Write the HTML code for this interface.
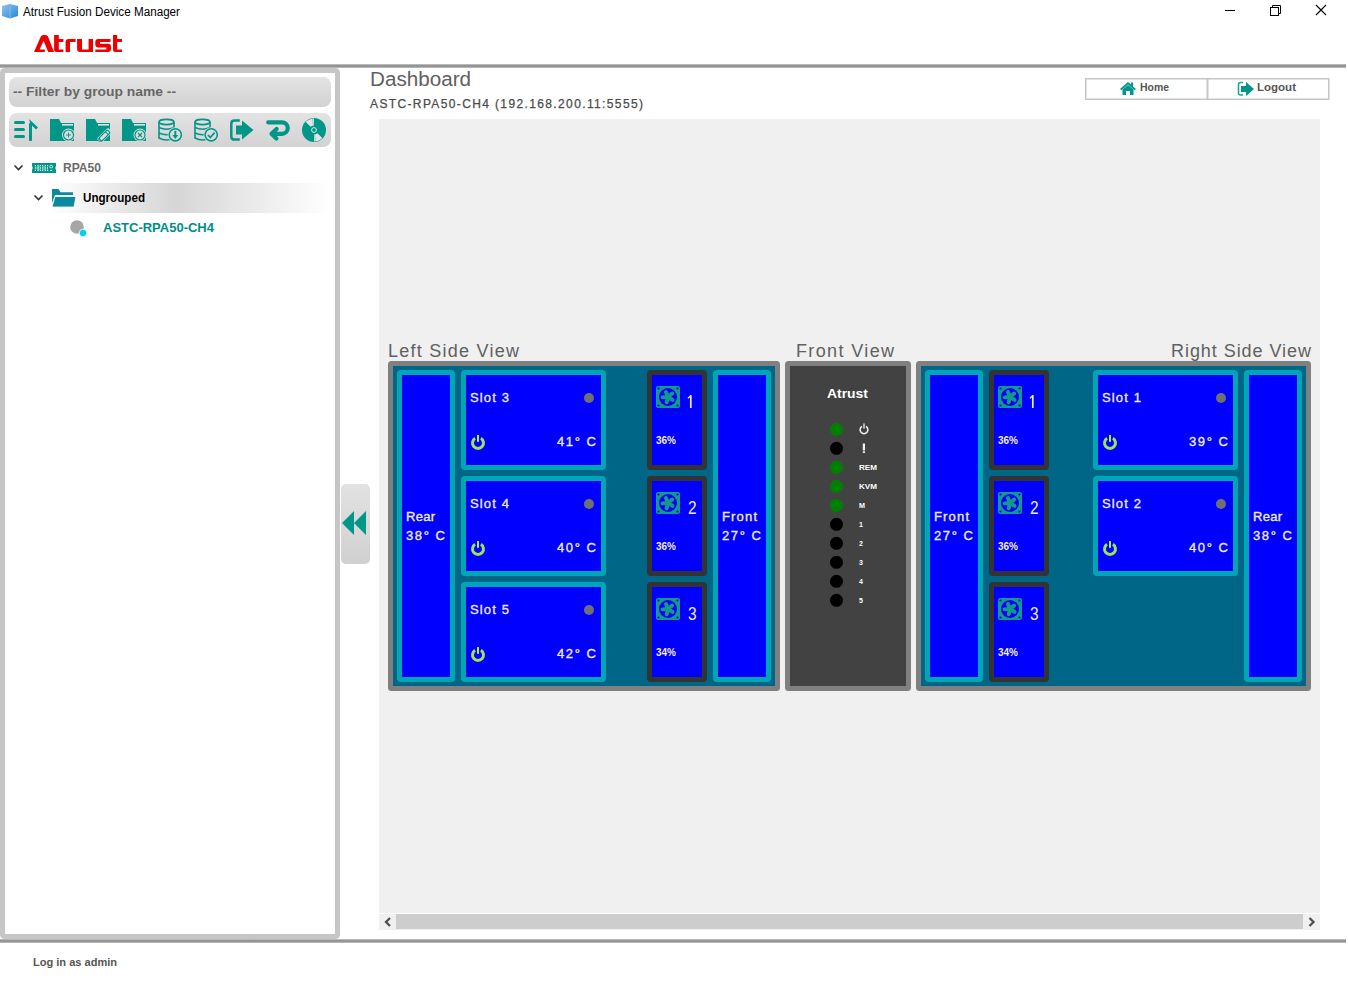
<!DOCTYPE html><html><head><meta charset="utf-8"><title>Atrust Fusion Device Manager</title><style>html,body{margin:0;padding:0;background:#fff;width:1348px;height:984px;overflow:hidden}svg{display:block;font-family:"Liberation Sans",sans-serif}</style></head><body>
<svg width="1348" height="984" viewBox="0 0 1348 984">
<defs>
<linearGradient id="gBox" x1="0" y1="0" x2="0" y2="1"><stop offset="0" stop-color="#e3e3e3"/><stop offset="1" stop-color="#d2d2d2"/></linearGradient>
<linearGradient id="gSel" x1="0" y1="0" x2="1" y2="0"><stop offset="0" stop-color="#ffffff"/><stop offset="0.45" stop-color="#d6d6d6"/><stop offset="1" stop-color="#ffffff"/></linearGradient>
<linearGradient id="gCube" x1="0" y1="0" x2="1" y2="1"><stop offset="0" stop-color="#8cc4f0"/><stop offset="1" stop-color="#2a86d6"/></linearGradient>
<linearGradient id="gLine" x1="0" y1="0" x2="0" y2="1"><stop offset="0" stop-color="#d2d2d2"/><stop offset="0.3" stop-color="#959595"/><stop offset="0.7" stop-color="#959595"/><stop offset="1" stop-color="#cccccc"/></linearGradient>
</defs>
<rect x="0" y="0" width="1348" height="984" fill="#fff"/>
<path d="M2,6 L10,4 L18,6 L18,16 L10,18.5 L2,16 Z" fill="url(#gCube)"/>
<path d="M10,7 L10,18" stroke="#a9d4f5" stroke-width="0.8" opacity="0.7"/>
<text x="23" y="16" font-size="12" fill="#000" font-weight="normal" text-anchor="start" textLength="157" lengthAdjust="spacingAndGlyphs" >Atrust Fusion Device Manager</text>
<path d="M1225,10.5 H1235" stroke="#000" stroke-width="1"/>
<rect x="1270.5" y="7.5" width="8" height="8" fill="none" stroke="#000" stroke-width="1"/>
<path d="M1272.5,7.5 V5.5 H1280.5 V13.5 H1278.5" fill="none" stroke="#000" stroke-width="1"/>
<path d="M1316,5 L1326,15 M1326,5 L1316,15" stroke="#000" stroke-width="1.1"/>
<g fill="#ee0000">
<path d="M34,52 L40.8,36.6 Q41.6,35 43.2,35 L45.6,35 Q47.2,35 48,36.6 L54,52 L48.2,52 L43.6,40.8 L39.6,49.4 L44.8,49.4 L44.8,52 Z"/>
<path d="M54.1,35 H58.8 V39 H63.4 V42 H58.8 V49.4 H63.4 V52 H56.6 Q54.1,52 54.1,49.5 Z"/>
<path d="M65.6,42 Q65.6,39 68.6,39 H75.6 V42 H70 V52 H65.6 Z"/>
<path d="M77.1,39 H82 V49.4 H88.6 V39 H93 V52 H80.1 Q77.1,52 77.1,49 Z"/>
<path d="M98.3,39 H110.5 V42 H100 V43.7 H108 Q111,43.7 111,46.7 V49 Q111,52 108,52 H95.3 V49.4 H106.3 V47.4 H98.3 Q95.3,47.4 95.3,44.4 V42 Q95.3,39 98.3,39 Z"/>
<path d="M113,35 H117.2 V39 H122 V42 H117.2 V49.4 H122 V52 H115.5 Q113,52 113,49.5 Z"/>
</g>
<rect x="0" y="64" width="1346" height="4" fill="url(#gLine)"/>
<rect x="0" y="939" width="1346" height="4" fill="url(#gLine)"/>
<rect x="2.5" y="70.5" width="335" height="866" rx="2" fill="#fff" stroke="#c6c6c6" stroke-width="5"/>
<rect x="9" y="77" width="322" height="30" rx="8" fill="url(#gBox)"/>
<text x="13" y="96" font-size="12" fill="#666" font-weight="bold" text-anchor="start" textLength="163" lengthAdjust="spacingAndGlyphs" >-- Filter by group name --</text>
<rect x="9" y="113" width="322" height="34" rx="8" fill="url(#gBox)"/>
<g fill="#009688"><rect x="14" y="121" width="11" height="3" rx="1.5"/><rect x="14" y="128" width="11" height="3" rx="1.5"/><rect x="14" y="135" width="11" height="3" rx="1.5"/><rect x="29" y="123" width="3" height="18" rx="1"/><path d="M29,119 L38,127.5 L36,129.5 L30.5,124 Z"/></g>
<path d="M50,119 H59 L61,123 H74 V141 H50 Z" fill="#009688"/>
<rect x="62" y="124" width="11" height="1.6" fill="#e2e2e2"/>
<circle cx="68.5" cy="135" r="6.5" fill="#dcdcdc"/><circle cx="68.5" cy="135" r="5" fill="none" stroke="#009688" stroke-width="1.2"/><path d="M68.5,132.5 V137.5 M66,135 H71" stroke="#009688" stroke-width="0.9"/>
<path d="M86,119 H95 L97,123 H110 V141 H86 Z" fill="#009688"/>
<rect x="98" y="124" width="11" height="1.6" fill="#e2e2e2"/>
<g transform="rotate(-45 104.5 135.5)"><rect x="96.5" y="132.3" width="16" height="6.4" rx="2" fill="#dcdcdc"/><rect x="98.5" y="133.4" width="12" height="4.2" rx="1.2" fill="none" stroke="#009688" stroke-width="1.2"/><path d="M107.8,133.4 V137.6" stroke="#009688" stroke-width="1.1"/><path d="M98.5,133.4 L96.8,135.5 L98.5,137.6" fill="none" stroke="#009688" stroke-width="1.1"/></g>
<path d="M122,119 H131 L133,123 H146 V141 H122 Z" fill="#009688"/>
<rect x="134" y="124" width="11" height="1.6" fill="#e2e2e2"/>
<circle cx="140" cy="135" r="6.5" fill="#dcdcdc"/><circle cx="140" cy="135" r="5" fill="none" stroke="#009688" stroke-width="1.2"/><path d="M138,133 L142,137 M142,133 L138,137" stroke="#009688" stroke-width="1.2"/>
<g fill="none" stroke="#009688" stroke-width="1.6"><ellipse cx="166.5" cy="122" rx="7.5" ry="2.6"/><path d="M159,122 V138 Q166.5,142 174,138 V122"/><path d="M159,127.5 Q166.5,131 174,127.5 M159,133 Q166.5,136.5 174,133"/></g>
<circle cx="175.3" cy="134.8" r="7.6" fill="#dcdcdc"/><circle cx="175.3" cy="134.8" r="6.1" fill="none" stroke="#009688" stroke-width="1.6"/><path d="M175.3,130.8 V136" stroke="#009688" stroke-width="2"/><path d="M172.3,135 H178.3 L175.3,139 Z" fill="#009688"/>
<g fill="none" stroke="#009688" stroke-width="1.6"><ellipse cx="202.5" cy="122" rx="7.5" ry="2.6"/><path d="M195,122 V138 Q202.5,142 210,138 V122"/><path d="M195,127.5 Q202.5,131 210,127.5 M195,133 Q202.5,136.5 210,133"/></g>
<circle cx="211.2" cy="134.8" r="7.6" fill="#dcdcdc"/><circle cx="211.2" cy="134.8" r="6.1" fill="none" stroke="#009688" stroke-width="1.6"/><path d="M208,135 L210.3,137.5 L214.6,132.6" fill="none" stroke="#009688" stroke-width="1.8"/>
<path d="M239.8,120.6 H234.5 Q231.3,120.6 231.3,123.8 V136.4 Q231.3,139.6 234.5,139.6 H239.8" fill="none" stroke="#009688" stroke-width="2.5"/>
<path d="M236,125.5 H242 V120.5 L253.5,130 L242,139.5 V134.5 H236 Z" fill="#009688"/>
<path d="M268.2,122.3 H282 A5.75,5.75 0 0 1 282,133.8 H272" fill="none" stroke="#009688" stroke-width="4.2" stroke-linecap="round"/>
<path d="M276.6,129 L271.5,133.8 L276.4,138.6" fill="none" stroke="#009688" stroke-width="4.2" stroke-linecap="round" stroke-linejoin="round"/>
<circle cx="314" cy="130" r="12" fill="#009688"/>
<path d="M310.69,126.80 L305.66,121.94 A11.6,11.6 0 0 1 314.00,118.40 L314.00,125.40 A4.6,4.6 0 0 0 310.69,126.80 Z" fill="#e4e4e4"/>
<path d="M317.31,133.20 L322.34,138.06 A11.6,11.6 0 0 1 314.00,141.60 L314.00,134.60 A4.6,4.6 0 0 0 317.31,133.20 Z" fill="#e4e4e4"/>
<path d="M313.39,125.04 L312.60,118.59 M314.61,134.96 L315.40,141.41" stroke="#009688" stroke-width="0.6" opacity="0.6"/>
<circle cx="314" cy="130" r="2.4" fill="none" stroke="#e4e4e4" stroke-width="1"/>
<path d="M14.5,165.5 L18.5,169.5 L22.5,165.5" fill="none" stroke="#333" stroke-width="1.6"/>
<path d="M32,163 H56 V166 Q54.5,168 56,170 V173 H32 V170 Q33.5,168 32,166 Z" fill="#009688"/>
<g fill="#f2fbfa"><rect x="34.8" y="165" width="1.2" height="1.2"/><rect x="34.8" y="169.8" width="1.2" height="1.2"/><rect x="34.9" y="166.8" width="0.9" height="2.6" opacity="0.8"/><rect x="37.5" y="165" width="1.2" height="1.2"/><rect x="37.5" y="169.8" width="1.2" height="1.2"/><rect x="37.6" y="166.8" width="0.9" height="2.6" opacity="0.8"/><rect x="39.8" y="165" width="1.2" height="1.2"/><rect x="39.8" y="169.8" width="1.2" height="1.2"/><rect x="39.9" y="166.8" width="0.9" height="2.6" opacity="0.8"/><rect x="42.0" y="165" width="1.2" height="1.2"/><rect x="42.0" y="169.8" width="1.2" height="1.2"/><rect x="42.1" y="166.8" width="0.9" height="2.6" opacity="0.8"/><rect x="44.7" y="165" width="1.2" height="1.2"/><rect x="44.7" y="169.8" width="1.2" height="1.2"/><rect x="44.8" y="166.8" width="0.9" height="2.6" opacity="0.8"/><rect x="47.0" y="165" width="1.2" height="1.2"/><rect x="47.0" y="169.8" width="1.2" height="1.2"/><rect x="47.1" y="166.8" width="0.9" height="2.6" opacity="0.8"/><rect x="36.6" y="166.2" width="3" height="3.6" opacity="0.35"/><rect x="43.2" y="166.2" width="2.6" height="3.6" opacity="0.35"/><rect x="50.1" y="169.9" width="2.2" height="1.1"/></g>
<circle cx="51.2" cy="166.6" r="1.4" fill="none" stroke="#f2fbfa" stroke-width="0.8"/>
<text x="63" y="172" font-size="12" fill="#6b6b6b" font-weight="bold" text-anchor="start" textLength="38" lengthAdjust="spacingAndGlyphs" >RPA50</text>
<rect x="49" y="183" width="282" height="30" fill="url(#gSel)"/>
<path d="M34.5,195.5 L38.5,199.5 L42.5,195.5" fill="none" stroke="#333" stroke-width="1.6"/>
<path d="M52,189 H58.5 L60.5,192.2 H73 V195 H55 L52,203 Z" fill="#0a8a9c"/>
<path d="M55,196.5 H76 L74,207 H52 Z" fill="#0a8a9c" stroke="#fff" stroke-width="0.8"/>
<text x="83" y="202" font-size="12" fill="#000" font-weight="bold" text-anchor="start" textLength="62" lengthAdjust="spacingAndGlyphs" >Ungrouped</text>
<circle cx="77" cy="227" r="6.8" fill="#a6a6a6"/>
<circle cx="83" cy="233" r="3.8" fill="#00d0f0" stroke="#fff" stroke-width="0.8"/>
<text x="103" y="232" font-size="12" fill="#008f86" font-weight="bold" text-anchor="start" textLength="111" lengthAdjust="spacingAndGlyphs" >ASTC-RPA50-CH4</text>
<defs><linearGradient id="gCol" x1="0" y1="0" x2="0" y2="1"><stop offset="0" stop-color="#e2e2e2"/><stop offset="1" stop-color="#d0d0d0"/></linearGradient></defs>
<rect x="341" y="484" width="29" height="80" rx="5" fill="url(#gCol)"/>
<path d="M342,523 L354,511 V535 Z M354,523 L366,511 V535 Z" fill="#009688"/>
<text x="370" y="86" font-size="20" fill="#606060" font-weight="normal" text-anchor="start" textLength="101" lengthAdjust="spacingAndGlyphs" >Dashboard</text>
<text x="370" y="107.6" font-size="12" fill="#4a4a4a" font-weight="normal" text-anchor="start" textLength="273" lengthAdjust="spacing" stroke="#4a4a4a" stroke-width="0.25">ASTC-RPA50-CH4 (192.168.200.11:5555)</text>
<rect x="1085.75" y="78.75" width="121.5" height="20.5" fill="#fff" stroke="#c6c6c6" stroke-width="1.5"/>
<rect x="1207.75" y="78.75" width="121" height="20.5" fill="#fff" stroke="#c6c6c6" stroke-width="1.5"/>
<path d="M1120,89 L1128,82 L1131,84.6 V82.5 H1133 V86.4 L1136,89 L1134.5,90.3 L1128,84.6 L1121.5,90.3 Z" fill="#009688"/>
<path d="M1122.5,89.5 L1128,85 L1133.5,89.5 V95 H1130 V91 H1126 V95 H1122.5 Z" fill="#009688"/>
<text x="1140" y="91" font-size="10.5" fill="#555" font-weight="bold" text-anchor="start" textLength="29" lengthAdjust="spacingAndGlyphs" >Home</text>
<path d="M1243,82.5 H1240.5 Q1238.5,82.5 1238.5,84.5 V93 Q1238.5,95 1240.5,95 H1243" fill="none" stroke="#18a89a" stroke-width="1.6"/>
<path d="M1241,86 H1246 V82 L1254,89 L1246,96 V92 H1241 Z" fill="#009688"/>
<text x="1257" y="91" font-size="10.5" fill="#555" font-weight="bold" text-anchor="start" textLength="39" lengthAdjust="spacingAndGlyphs" >Logout</text>
<rect x="379" y="119" width="941" height="794" fill="#f0f0f0"/>
<rect x="379" y="914" width="941" height="16" fill="#f0f0f0"/>
<rect x="396" y="914" width="907" height="15" fill="#cdcdcd"/>
<path d="M390,918 L386,922 L390,926" fill="none" stroke="#505050" stroke-width="2.3"/>
<path d="M1309.5,918 L1313.5,922 L1309.5,926" fill="none" stroke="#505050" stroke-width="2.3"/>
<text x="33" y="966" font-size="11" fill="#555" font-weight="bold" text-anchor="start" textLength="84" lengthAdjust="spacingAndGlyphs" >Log in as admin</text>
<text x="388" y="357" font-size="18" fill="#606060" font-weight="normal" text-anchor="start" textLength="131" lengthAdjust="spacing" >Left Side View</text>
<text x="796" y="357" font-size="18" fill="#606060" font-weight="normal" text-anchor="start" textLength="98" lengthAdjust="spacing" >Front View</text>
<text x="1311" y="357" font-size="18" fill="#606060" font-weight="normal" text-anchor="end" textLength="140" lengthAdjust="spacing" >Right Side View</text>
<rect x="390.5" y="363.5" width="387" height="325" rx="1" fill="#006688" stroke="#808080" stroke-width="5"/>
<rect x="399.5" y="372.5" width="53" height="307" rx="1.5" fill="#0000ff" stroke="#00a6b6" stroke-width="5"/>
<text x="406" y="521" font-size="13" fill="#eeebcc" font-weight="normal" text-anchor="start" textLength="29" lengthAdjust="spacing" stroke="#eeebcc" stroke-width="0.35">Rear</text>
<text x="406" y="540" font-size="13" fill="#eeebcc" font-weight="normal" text-anchor="start" textLength="39" lengthAdjust="spacing" stroke="#eeebcc" stroke-width="0.35">38° C</text>
<rect x="463.5" y="372.5" width="140" height="95" rx="1.5" fill="#0000ff" stroke="#00a6b6" stroke-width="5"/>
<text x="470" y="402" font-size="13" fill="#eeebcc" font-weight="normal" text-anchor="start" textLength="39" lengthAdjust="spacing" stroke="#eeebcc" stroke-width="0.35">Slot 3</text>
<circle cx="589" cy="398" r="5" fill="#707070"/>
<path d="M475.09,438.34 A5.5,5.5 0 1 0 480.91,438.34" fill="none" stroke="#9be357" stroke-width="3"/>
<rect x="477.0" y="435.0" width="2" height="6.8" fill="#a8f53c"/>
<text x="596" y="446" font-size="13" fill="#eeebcc" font-weight="normal" text-anchor="end" textLength="39" lengthAdjust="spacing" stroke="#eeebcc" stroke-width="0.35">41° C</text>
<rect x="463.5" y="478.5" width="140" height="95" rx="1.5" fill="#0000ff" stroke="#00a6b6" stroke-width="5"/>
<text x="470" y="508" font-size="13" fill="#eeebcc" font-weight="normal" text-anchor="start" textLength="39" lengthAdjust="spacing" stroke="#eeebcc" stroke-width="0.35">Slot 4</text>
<circle cx="589" cy="504" r="5" fill="#707070"/>
<path d="M475.09,544.34 A5.5,5.5 0 1 0 480.91,544.34" fill="none" stroke="#9be357" stroke-width="3"/>
<rect x="477.0" y="541.0" width="2" height="6.8" fill="#a8f53c"/>
<text x="596" y="552" font-size="13" fill="#eeebcc" font-weight="normal" text-anchor="end" textLength="39" lengthAdjust="spacing" stroke="#eeebcc" stroke-width="0.35">40° C</text>
<rect x="463.5" y="584.5" width="140" height="95" rx="1.5" fill="#0000ff" stroke="#00a6b6" stroke-width="5"/>
<text x="470" y="614" font-size="13" fill="#eeebcc" font-weight="normal" text-anchor="start" textLength="39" lengthAdjust="spacing" stroke="#eeebcc" stroke-width="0.35">Slot 5</text>
<circle cx="589" cy="610" r="5" fill="#707070"/>
<path d="M475.09,650.34 A5.5,5.5 0 1 0 480.91,650.34" fill="none" stroke="#9be357" stroke-width="3"/>
<rect x="477.0" y="647.0" width="2" height="6.8" fill="#a8f53c"/>
<text x="596" y="658" font-size="13" fill="#eeebcc" font-weight="normal" text-anchor="end" textLength="39" lengthAdjust="spacing" stroke="#eeebcc" stroke-width="0.35">42° C</text>
<rect x="649.5" y="372.5" width="55" height="95" rx="1.5" fill="#0000ff" stroke="#333333" stroke-width="5"/>
<rect x="656" y="386" width="24" height="22" rx="2" fill="#129a8a"/>
<circle cx="668" cy="397" r="9" fill="#0000ff"/>
<circle cx="658.5" cy="388.5" r="1.1" fill="#0000ff"/>
<circle cx="677.5" cy="388.5" r="1.1" fill="#0000ff"/>
<circle cx="658.5" cy="405.5" r="1.1" fill="#0000ff"/>
<circle cx="677.5" cy="405.5" r="1.1" fill="#0000ff"/>
<g stroke="#129a8a" stroke-width="3.9" stroke-linecap="round"><path d="M668,397 L665.98,391.99"/><path d="M668,397 L672.14,393.53"/><path d="M668,397 L672.58,399.86"/><path d="M668,397 L666.69,402.24"/><path d="M668,397 L662.61,397.38"/></g>
<circle cx="668" cy="397" r="2.6" fill="#129a8a"/>
<path d="M690.8,395.2 V408" stroke="#eeebcc" stroke-width="1.7"/><path d="M691,395.5 L688,398.3" stroke="#eeebcc" stroke-width="1.4"/>
<text x="656" y="444" font-size="10" fill="#eeebcc" font-weight="bold" text-anchor="start" textLength="20" lengthAdjust="spacingAndGlyphs" >36%</text>
<rect x="649.5" y="478.5" width="55" height="95" rx="1.5" fill="#0000ff" stroke="#333333" stroke-width="5"/>
<rect x="656" y="492" width="24" height="22" rx="2" fill="#129a8a"/>
<circle cx="668" cy="503" r="9" fill="#0000ff"/>
<circle cx="658.5" cy="494.5" r="1.1" fill="#0000ff"/>
<circle cx="677.5" cy="494.5" r="1.1" fill="#0000ff"/>
<circle cx="658.5" cy="511.5" r="1.1" fill="#0000ff"/>
<circle cx="677.5" cy="511.5" r="1.1" fill="#0000ff"/>
<g stroke="#129a8a" stroke-width="3.9" stroke-linecap="round"><path d="M668,503 L665.98,497.99"/><path d="M668,503 L672.14,499.53"/><path d="M668,503 L672.58,505.86"/><path d="M668,503 L666.69,508.24"/><path d="M668,503 L662.61,503.38"/></g>
<circle cx="668" cy="503" r="2.6" fill="#129a8a"/>
<text x="688" y="514" font-size="18" fill="#eeebcc" font-weight="normal" text-anchor="start" textLength="8.6" lengthAdjust="spacingAndGlyphs" >2</text>
<text x="656" y="550" font-size="10" fill="#eeebcc" font-weight="bold" text-anchor="start" textLength="20" lengthAdjust="spacingAndGlyphs" >36%</text>
<rect x="649.5" y="584.5" width="55" height="95" rx="1.5" fill="#0000ff" stroke="#333333" stroke-width="5"/>
<rect x="656" y="598" width="24" height="22" rx="2" fill="#129a8a"/>
<circle cx="668" cy="609" r="9" fill="#0000ff"/>
<circle cx="658.5" cy="600.5" r="1.1" fill="#0000ff"/>
<circle cx="677.5" cy="600.5" r="1.1" fill="#0000ff"/>
<circle cx="658.5" cy="617.5" r="1.1" fill="#0000ff"/>
<circle cx="677.5" cy="617.5" r="1.1" fill="#0000ff"/>
<g stroke="#129a8a" stroke-width="3.9" stroke-linecap="round"><path d="M668,609 L665.98,603.99"/><path d="M668,609 L672.14,605.53"/><path d="M668,609 L672.58,611.86"/><path d="M668,609 L666.69,614.24"/><path d="M668,609 L662.61,609.38"/></g>
<circle cx="668" cy="609" r="2.6" fill="#129a8a"/>
<text x="688" y="620" font-size="18" fill="#eeebcc" font-weight="normal" text-anchor="start" textLength="8.6" lengthAdjust="spacingAndGlyphs" >3</text>
<text x="656" y="656" font-size="10" fill="#eeebcc" font-weight="bold" text-anchor="start" textLength="20" lengthAdjust="spacingAndGlyphs" >34%</text>
<rect x="715.5" y="372.5" width="53" height="307" rx="1.5" fill="#0000ff" stroke="#00a6b6" stroke-width="5"/>
<text x="722" y="521" font-size="13" fill="#eeebcc" font-weight="normal" text-anchor="start" textLength="35" lengthAdjust="spacing" stroke="#eeebcc" stroke-width="0.35">Front</text>
<text x="722" y="540" font-size="13" fill="#eeebcc" font-weight="normal" text-anchor="start" textLength="39" lengthAdjust="spacing" stroke="#eeebcc" stroke-width="0.35">27° C</text>
<rect x="787.5" y="363.5" width="121" height="325" rx="1" fill="#424242" stroke="#808080" stroke-width="5"/>
<text x="847.5" y="398" font-size="13" fill="#fff" font-weight="bold" text-anchor="middle" textLength="41" lengthAdjust="spacingAndGlyphs" >Atrust</text>
<circle cx="836.5" cy="429.3" r="6.5" fill="#008000"/>
<path d="M862.05,426.42 A3.9,3.9 0 1 0 865.95,426.42" fill="none" stroke="#f0f0f0" stroke-width="1.5"/>
<rect x="863.35" y="423.40000000000003" width="1.3" height="5.2" fill="#f0f0f0"/>
<circle cx="836.5" cy="448.3" r="6.5" fill="#000"/>
<rect x="862.8" y="443.5" width="2.2" height="7" fill="#f0f0f0"/><rect x="862.8" y="451.3" width="2.2" height="1.7" fill="#f0f0f0"/>
<circle cx="836.5" cy="467.3" r="6.5" fill="#008000"/>
<text x="859" y="470.1" font-size="7" fill="#fff" font-weight="bold" text-anchor="start" textLength="18" lengthAdjust="spacingAndGlyphs" >REM</text>
<circle cx="836.5" cy="486.3" r="6.5" fill="#008000"/>
<text x="859" y="489.1" font-size="7" fill="#fff" font-weight="bold" text-anchor="start" textLength="18" lengthAdjust="spacingAndGlyphs" >KVM</text>
<circle cx="836.5" cy="505.3" r="6.5" fill="#008000"/>
<text x="859" y="508.1" font-size="7" fill="#fff" font-weight="bold" text-anchor="start" textLength="6" lengthAdjust="spacingAndGlyphs" >M</text>
<circle cx="836.5" cy="524.3" r="6.5" fill="#000"/>
<text x="859" y="527.0999999999999" font-size="7" fill="#fff" font-weight="bold" text-anchor="start" >1</text>
<circle cx="836.5" cy="543.3" r="6.5" fill="#000"/>
<text x="859" y="546.0999999999999" font-size="7" fill="#fff" font-weight="bold" text-anchor="start" >2</text>
<circle cx="836.5" cy="562.3" r="6.5" fill="#000"/>
<text x="859" y="565.0999999999999" font-size="7" fill="#fff" font-weight="bold" text-anchor="start" >3</text>
<circle cx="836.5" cy="581.3" r="6.5" fill="#000"/>
<text x="859" y="584.0999999999999" font-size="7" fill="#fff" font-weight="bold" text-anchor="start" >4</text>
<circle cx="836.5" cy="600.3" r="6.5" fill="#000"/>
<text x="859" y="603.0999999999999" font-size="7" fill="#fff" font-weight="bold" text-anchor="start" >5</text>
<rect x="918.5" y="363.5" width="390" height="325" rx="1" fill="#006688" stroke="#808080" stroke-width="5"/>
<rect x="927.5" y="372.5" width="53" height="307" rx="1.5" fill="#0000ff" stroke="#00a6b6" stroke-width="5"/>
<text x="934" y="521" font-size="13" fill="#eeebcc" font-weight="normal" text-anchor="start" textLength="35" lengthAdjust="spacing" stroke="#eeebcc" stroke-width="0.35">Front</text>
<text x="934" y="540" font-size="13" fill="#eeebcc" font-weight="normal" text-anchor="start" textLength="39" lengthAdjust="spacing" stroke="#eeebcc" stroke-width="0.35">27° C</text>
<rect x="991.5" y="372.5" width="55" height="95" rx="1.5" fill="#0000ff" stroke="#333333" stroke-width="5"/>
<rect x="998" y="386" width="24" height="22" rx="2" fill="#129a8a"/>
<circle cx="1010" cy="397" r="9" fill="#0000ff"/>
<circle cx="1000.5" cy="388.5" r="1.1" fill="#0000ff"/>
<circle cx="1019.5" cy="388.5" r="1.1" fill="#0000ff"/>
<circle cx="1000.5" cy="405.5" r="1.1" fill="#0000ff"/>
<circle cx="1019.5" cy="405.5" r="1.1" fill="#0000ff"/>
<g stroke="#129a8a" stroke-width="3.9" stroke-linecap="round"><path d="M1010,397 L1007.98,391.99"/><path d="M1010,397 L1014.14,393.53"/><path d="M1010,397 L1014.58,399.86"/><path d="M1010,397 L1008.69,402.24"/><path d="M1010,397 L1004.61,397.38"/></g>
<circle cx="1010" cy="397" r="2.6" fill="#129a8a"/>
<path d="M1032.8,395.2 V408" stroke="#eeebcc" stroke-width="1.7"/><path d="M1033,395.5 L1030,398.3" stroke="#eeebcc" stroke-width="1.4"/>
<text x="998" y="444" font-size="10" fill="#eeebcc" font-weight="bold" text-anchor="start" textLength="20" lengthAdjust="spacingAndGlyphs" >36%</text>
<rect x="991.5" y="478.5" width="55" height="95" rx="1.5" fill="#0000ff" stroke="#333333" stroke-width="5"/>
<rect x="998" y="492" width="24" height="22" rx="2" fill="#129a8a"/>
<circle cx="1010" cy="503" r="9" fill="#0000ff"/>
<circle cx="1000.5" cy="494.5" r="1.1" fill="#0000ff"/>
<circle cx="1019.5" cy="494.5" r="1.1" fill="#0000ff"/>
<circle cx="1000.5" cy="511.5" r="1.1" fill="#0000ff"/>
<circle cx="1019.5" cy="511.5" r="1.1" fill="#0000ff"/>
<g stroke="#129a8a" stroke-width="3.9" stroke-linecap="round"><path d="M1010,503 L1007.98,497.99"/><path d="M1010,503 L1014.14,499.53"/><path d="M1010,503 L1014.58,505.86"/><path d="M1010,503 L1008.69,508.24"/><path d="M1010,503 L1004.61,503.38"/></g>
<circle cx="1010" cy="503" r="2.6" fill="#129a8a"/>
<text x="1030" y="514" font-size="18" fill="#eeebcc" font-weight="normal" text-anchor="start" textLength="8.6" lengthAdjust="spacingAndGlyphs" >2</text>
<text x="998" y="550" font-size="10" fill="#eeebcc" font-weight="bold" text-anchor="start" textLength="20" lengthAdjust="spacingAndGlyphs" >36%</text>
<rect x="991.5" y="584.5" width="55" height="95" rx="1.5" fill="#0000ff" stroke="#333333" stroke-width="5"/>
<rect x="998" y="598" width="24" height="22" rx="2" fill="#129a8a"/>
<circle cx="1010" cy="609" r="9" fill="#0000ff"/>
<circle cx="1000.5" cy="600.5" r="1.1" fill="#0000ff"/>
<circle cx="1019.5" cy="600.5" r="1.1" fill="#0000ff"/>
<circle cx="1000.5" cy="617.5" r="1.1" fill="#0000ff"/>
<circle cx="1019.5" cy="617.5" r="1.1" fill="#0000ff"/>
<g stroke="#129a8a" stroke-width="3.9" stroke-linecap="round"><path d="M1010,609 L1007.98,603.99"/><path d="M1010,609 L1014.14,605.53"/><path d="M1010,609 L1014.58,611.86"/><path d="M1010,609 L1008.69,614.24"/><path d="M1010,609 L1004.61,609.38"/></g>
<circle cx="1010" cy="609" r="2.6" fill="#129a8a"/>
<text x="1030" y="620" font-size="18" fill="#eeebcc" font-weight="normal" text-anchor="start" textLength="8.6" lengthAdjust="spacingAndGlyphs" >3</text>
<text x="998" y="656" font-size="10" fill="#eeebcc" font-weight="bold" text-anchor="start" textLength="20" lengthAdjust="spacingAndGlyphs" >34%</text>
<rect x="1095.5" y="372.5" width="140" height="95" rx="1.5" fill="#0000ff" stroke="#00a6b6" stroke-width="5"/>
<text x="1102" y="402" font-size="13" fill="#eeebcc" font-weight="normal" text-anchor="start" textLength="39" lengthAdjust="spacing" stroke="#eeebcc" stroke-width="0.35">Slot 1</text>
<circle cx="1221" cy="398" r="5" fill="#707070"/>
<path d="M1107.09,438.34 A5.5,5.5 0 1 0 1112.91,438.34" fill="none" stroke="#9be357" stroke-width="3"/>
<rect x="1109.0" y="435.0" width="2" height="6.8" fill="#a8f53c"/>
<text x="1228" y="446" font-size="13" fill="#eeebcc" font-weight="normal" text-anchor="end" textLength="39" lengthAdjust="spacing" stroke="#eeebcc" stroke-width="0.35">39° C</text>
<rect x="1095.5" y="478.5" width="140" height="95" rx="1.5" fill="#0000ff" stroke="#00a6b6" stroke-width="5"/>
<text x="1102" y="508" font-size="13" fill="#eeebcc" font-weight="normal" text-anchor="start" textLength="39" lengthAdjust="spacing" stroke="#eeebcc" stroke-width="0.35">Slot 2</text>
<circle cx="1221" cy="504" r="5" fill="#707070"/>
<path d="M1107.09,544.34 A5.5,5.5 0 1 0 1112.91,544.34" fill="none" stroke="#9be357" stroke-width="3"/>
<rect x="1109.0" y="541.0" width="2" height="6.8" fill="#a8f53c"/>
<text x="1228" y="552" font-size="13" fill="#eeebcc" font-weight="normal" text-anchor="end" textLength="39" lengthAdjust="spacing" stroke="#eeebcc" stroke-width="0.35">40° C</text>
<rect x="1246.5" y="372.5" width="53" height="307" rx="1.5" fill="#0000ff" stroke="#00a6b6" stroke-width="5"/>
<text x="1253" y="521" font-size="13" fill="#eeebcc" font-weight="normal" text-anchor="start" textLength="29" lengthAdjust="spacing" stroke="#eeebcc" stroke-width="0.35">Rear</text>
<text x="1253" y="540" font-size="13" fill="#eeebcc" font-weight="normal" text-anchor="start" textLength="39" lengthAdjust="spacing" stroke="#eeebcc" stroke-width="0.35">38° C</text>
</svg></body></html>
